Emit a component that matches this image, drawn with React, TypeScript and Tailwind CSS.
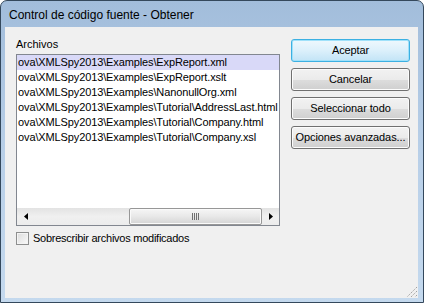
import React from "react";

const files = [
  "ova\\XMLSpy2013\\Examples\\ExpReport.xml",
  "ova\\XMLSpy2013\\Examples\\ExpReport.xslt",
  "ova\\XMLSpy2013\\Examples\\NanonullOrg.xml",
  "ova\\XMLSpy2013\\Examples\\Tutorial\\AddressLast.html",
  "ova\\XMLSpy2013\\Examples\\Tutorial\\Company.html",
  "ova\\XMLSpy2013\\Examples\\Tutorial\\Company.xsl",
];

function Btn({ label, def }: { label: string; def?: boolean }) {
  return (
    <div
      className={
        def
          ? "flex h-[23px] w-[119px] items-center justify-center rounded-[3px] border border-[#3cb0e2] bg-gradient-to-b from-[#eef8fd] via-[#dcf0fb] to-[#c2e4f6] shadow-[inset_0_0_0_1px_#9fe1fa] text-[11px] tracking-[-0.1px] text-black"
          : "flex h-[23px] w-[119px] items-center justify-center rounded-[3px] border border-[#707070] bg-[linear-gradient(to_bottom,#f2f2f2_0%,#ebebeb_50%,#dddddd_51%,#cfcfcf_100%)] shadow-[inset_0_0_0_1px_#fcfcfc] text-[11px] tracking-[-0.1px] text-black"
      }
    >
      {label}
    </div>
  );
}

export default function App() {
  return (
    <div
      className="h-[303px] w-[424px] bg-white"
      style={{ fontFamily: '"Liberation Sans", Arial, sans-serif' }}
    >
      <div className="flex h-full w-full flex-col rounded-t-[7px] border border-[#34485c] bg-gradient-to-b from-[#a2bddb] via-[#b8cfe8] to-[#c4d9ee]">
        <div className="flex h-[26px] items-center pl-[8px] pt-[2px] text-[12px] leading-[14px] text-black">
          Control de código fuente - Obtener
        </div>
        <div className="relative ml-[4px] mr-[5px] mb-[4px] flex flex-1 bg-[#f0f0f0] pl-[11px]">
          <div className="flex w-[264px] flex-col pt-[10px]">
            <div className="mb-[2px] text-[11px] leading-[15px] text-black">Archivos</div>
            <div className="flex h-[172px] flex-col border border-[#828790] bg-white">
              <div className="flex flex-1 flex-col overflow-hidden">
                {files.map((f, i) => (
                  <div
                    key={f}
                    className={
                      (i === 0 ? "bg-[#d9d9f8] " : "") +
                      "h-[15px] whitespace-nowrap pl-[1px] text-[11px] leading-[15px] tracking-[-0.12px] text-black"
                    }
                  >
                    {f}
                  </div>
                ))}
              </div>
              <div className="flex h-[17px] items-stretch bg-gradient-to-b from-[#e3e3e3] via-[#f0f0f0] to-[#ececec]">
                <div className="flex w-[17px] items-center justify-center">
                  <svg width="4" height="7" viewBox="0 0 4 7">
                    <path d="M4 0 L0 3.5 L4 7 Z" fill="#000" />
                  </svg>
                </div>
                <div className="flex flex-1 justify-end">
                  <div className="flex w-[133px] items-center justify-center rounded-[2px] border border-[#979797] bg-gradient-to-b from-[#f6f6f6] via-[#e8e8e8] to-[#d4d4d4] shadow-[inset_0_0_0_1px_#fafafa]">
                    <svg width="8" height="7" viewBox="0 0 8 7">
                      <rect x="0" y="0" width="1" height="7" fill="#707070" />
                      <rect x="2" y="0" width="1" height="7" fill="#707070" />
                      <rect x="4" y="0" width="1" height="7" fill="#707070" />
                      <rect x="6" y="0" width="1" height="7" fill="#707070" />
                    </svg>
                  </div>
                </div>
                <div className="flex w-[17px] items-center justify-center">
                  <svg width="4" height="7" viewBox="0 0 4 7">
                    <path d="M0 0 L4 3.5 L0 7 Z" fill="#000" />
                  </svg>
                </div>
              </div>
            </div>
            <div className="mt-[6px] flex h-[13px] items-center gap-[4px]">
              <div className="h-[13px] w-[13px] border border-[#8e8f8f] bg-gradient-to-br from-[#dcdcdc] to-[#fafafa] shadow-[inset_0_0_0_1px_#f4f4f4]" />
              <span className="text-[11px] leading-[13px] tracking-[-0.25px] text-black">
                Sobrescribir archivos modificados
              </span>
            </div>
          </div>
          <div className="ml-[11px] flex flex-col gap-[6px] pt-[12px]">
            <Btn label="Aceptar" def />
            <Btn label="Cancelar" />
            <Btn label="Seleccionar todo" />
            <Btn label="Opciones avanzadas..." />
          </div>
          <svg
            className="absolute bottom-0 right-0"
            width="12"
            height="12"
            viewBox="0 0 12 12"
          >
            <path d="M11 1 L1 11" stroke="#a0a0a0" strokeWidth="1" strokeDasharray="1.4 1" />
            <path d="M11 5 L5 11" stroke="#a0a0a0" strokeWidth="1" strokeDasharray="1.4 1" />
            <path d="M11 9 L9 11" stroke="#a0a0a0" strokeWidth="1" strokeDasharray="1.4 1" />
          </svg>
        </div>
      </div>
    </div>
  );
}
